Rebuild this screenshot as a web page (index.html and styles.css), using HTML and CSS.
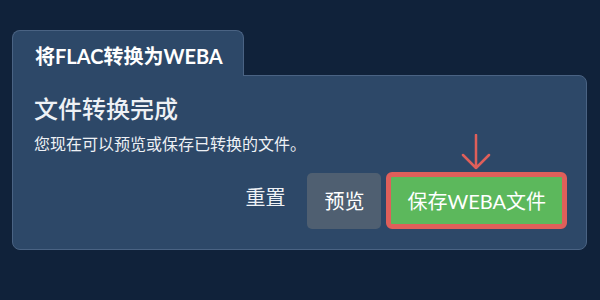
FILE: index.html
```html
<!DOCTYPE html>
<html lang="zh-CN">
<head>
    <meta charset="UTF-8">
    <meta name="viewport" content="width=device-width, initial-scale=1.0">
    <title>将FLAC转换为WEBA</title>
    <link rel="stylesheet" href="styles.css">
</head>
<body>

<div class="converter">
    <div class="tab">将FLAC转换为WEBA</div>

    <div class="panel">
        <h2>文件转换完成</h2>
        <p class="note">您现在可以预览或保存已转换的文件。</p>

        <div class="actions">
            <button class="btn btn-reset">重置</button>
            <button class="btn btn-preview">预览</button>
            <div class="save-wrap">
                <svg class="hint-arrow" width="30" height="36" viewBox="0 0 30 36">
                    <path d="M15 1 L15 34 M2 21 L15 34 L28 21" fill="none" stroke="#df5f5a" stroke-width="2.5" stroke-linecap="round" stroke-linejoin="round"/>
                </svg>
                <button class="btn btn-save">保存WEBA文件</button>
            </div>
        </div>
    </div>
</div>

</body>
</html>
```

FILE: styles.css
```css
body {
    margin: 0;
    padding: 30px 12px;
    background-color: #10223a;
    font-family: Lato, "Noto Sans CJK SC", sans-serif;
}
.converter {
    width: 575px;
}
.tab {
    position: relative;
    z-index: 1;
    width: 232px;
    height: 46px;
    box-sizing: border-box;
    margin-bottom: -1px;
    padding-left: 22px;
    line-height: 50px;
    background-color: #2d4868;
    border: 1px solid #4a6383;
    border-bottom: none;
    border-radius: 8px 8px 0 0;
    color: #ffffff;
    font-size: 20px;
    font-weight: bold;
}
.panel {
    box-sizing: border-box;
    height: 175px;
    padding: 18px 19px 0 21px;
    background-color: #2d4868;
    border: 1px solid #4a6383;
    border-radius: 0 8px 8px 8px;
}
h2 {
    margin: 0;
    font-size: 24px;
    font-weight: 500;
    line-height: 30px;
    color: #eef1f5;
}
.note {
    margin: 9px 0 0;
    font-size: 16px;
    line-height: 22px;
    color: #eef1f5;
}
.actions {
    display: flex;
    justify-content: flex-end;
    align-items: center;
    gap: 5px;
    margin-top: 17px;
}
.btn {
    height: 56px;
    padding: 0 17px;
    border: none;
    border-radius: 5px;
    font-family: Lato, "Noto Sans CJK SC", sans-serif;
    font-size: 20px;
    color: #ffffff;
    cursor: pointer;
}
.btn-reset {
    background: none;
    padding-bottom: 8px;
    color: #eef1f5;
}
.btn-preview {
    background-color: #4f5f71;
}
.save-wrap {
    position: relative;
}
.btn-save {
    display: block;
    height: 57px;
    padding: 0 16px;
    background-color: #5cb85c;
    border: 5px solid #df5f5a;
    border-radius: 6px;
}
.hint-arrow {
    position: absolute;
    left: 50%;
    bottom: 59px;
    margin-left: -16px;
}
```
